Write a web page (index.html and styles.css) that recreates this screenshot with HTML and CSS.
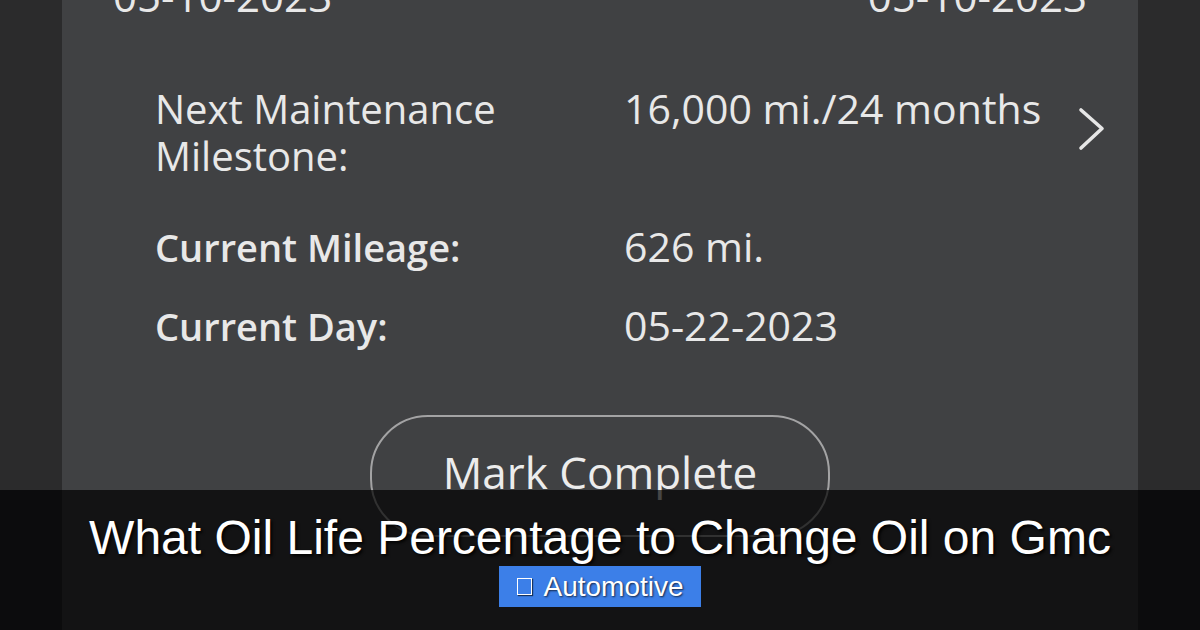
FILE: index.html
```html
<!DOCTYPE html>
<html lang="en">
<head>
    <meta charset="UTF-8">
    <meta name="viewport" content="width=device-width, initial-scale=1.0">
    <title>What Oil Life Percentage to Change Oil on Gmc</title>
    <link rel="stylesheet" href="styles.css">
</head>
<body>
    <div class="page">
        <div class="panel">
            <div class="dates">
                <span>05-10-2023</span>
                <span>05-10-2023</span>
            </div>

            <div class="row milestone">
                <div class="label">Next Maintenance Milestone:</div>
                <div class="value">16,000 mi./24 months</div>
                <div class="chevron">
                    <svg width="30" height="46" viewBox="0 0 30 46">
                        <path d="M3 3 L24 21.5 L3 41" fill="none" stroke="#e6e6e6" stroke-width="3.6" stroke-linecap="round" stroke-linejoin="round"/>
                    </svg>
                </div>
            </div>

            <div class="row mileage">
                <div class="label bold">Current Mileage:</div>
                <div class="value">626 mi.</div>
            </div>

            <div class="row day">
                <div class="label bold">Current Day:</div>
                <div class="value">05-22-2023</div>
            </div>

            <div class="actions">
                <div class="mark-btn">Mark Complete</div>
            </div>
        </div>

        <div class="overlay">
            <h1>What Oil Life Percentage to Change Oil on Gmc</h1>
            <span class="badge"><span class="tofu"></span>Automotive</span>
        </div>
    </div>
</body>
</html>
```

FILE: styles.css
```css
body {
    margin: 0;
    background-color: #2b2b2c;
    font-family: 'Open Sans', sans-serif;
}
.page {
    position: relative;
    width: 1200px;
    height: 630px;
    overflow: hidden;
    background-color: #2b2b2c;
}
.panel {
    display: flow-root;
    width: 1076px;
    height: 630px;
    margin: 0 auto;
    background-color: #404143;
    color: #e8e8e8;
}
.dates {
    display: flex;
    justify-content: space-between;
    padding: 0 51px;
    margin-top: -28px;
    font-size: 42px;
    line-height: 47px;
    height: 47px;
}
.row {
    display: grid;
    grid-template-columns: 469px 1fr 60px;
    align-items: baseline;
    padding-left: 93px;
    font-size: 40px;
    line-height: 47px;
}
.milestone {
    margin-top: 66px;
}
.mileage {
    margin-top: 44px;
}
.day {
    margin-top: 31px;
}
.label {
    width: 380px;
}
.label.bold {
    font-weight: 600;
    font-size: 38px;
}
.value {
    font-size: 41px;
}
.chevron {
    align-self: start;
    padding-top: 22px;
}
.chevron svg {
    display: block;
}
.actions {
    display: flex;
    justify-content: center;
    margin-top: 65px;
}
.mark-btn {
    width: 456px;
    height: 118px;
    border: 2px solid #a3a3a4;
    border-radius: 58px;
    font-size: 44px;
    line-height: 110px;
    text-align: center;
    color: #ececec;
}
.overlay {
    position: absolute;
    left: 0;
    bottom: 0;
    width: 100%;
    height: 140px;
    background-color: rgba(0, 0, 0, 0.7);
    display: flex;
    flex-direction: column;
    align-items: center;
    font-family: 'Liberation Sans', Arial, sans-serif;
}
.overlay h1 {
    margin: 20px 0 0;
    font-size: 48px;
    font-weight: 400;
    line-height: 56px;
    color: #ffffff;
    text-shadow: 2px 2px 3px rgba(0, 0, 0, 0.9);
}
.badge {
    display: flex;
    align-items: center;
    gap: 11px;
    height: 41px;
    padding: 0 17px 0 18px;
    background-color: #3c7fe8;
    color: #ffffff;
    font-size: 28px;
    text-shadow: 1px 1px 2px rgba(0, 0, 0, 0.7);
}
.tofu {
    width: 13px;
    height: 15px;
    border: 1px solid #ffffff;
    box-shadow: 1px 1px 1px rgba(0, 0, 0, 0.6);
}
```
